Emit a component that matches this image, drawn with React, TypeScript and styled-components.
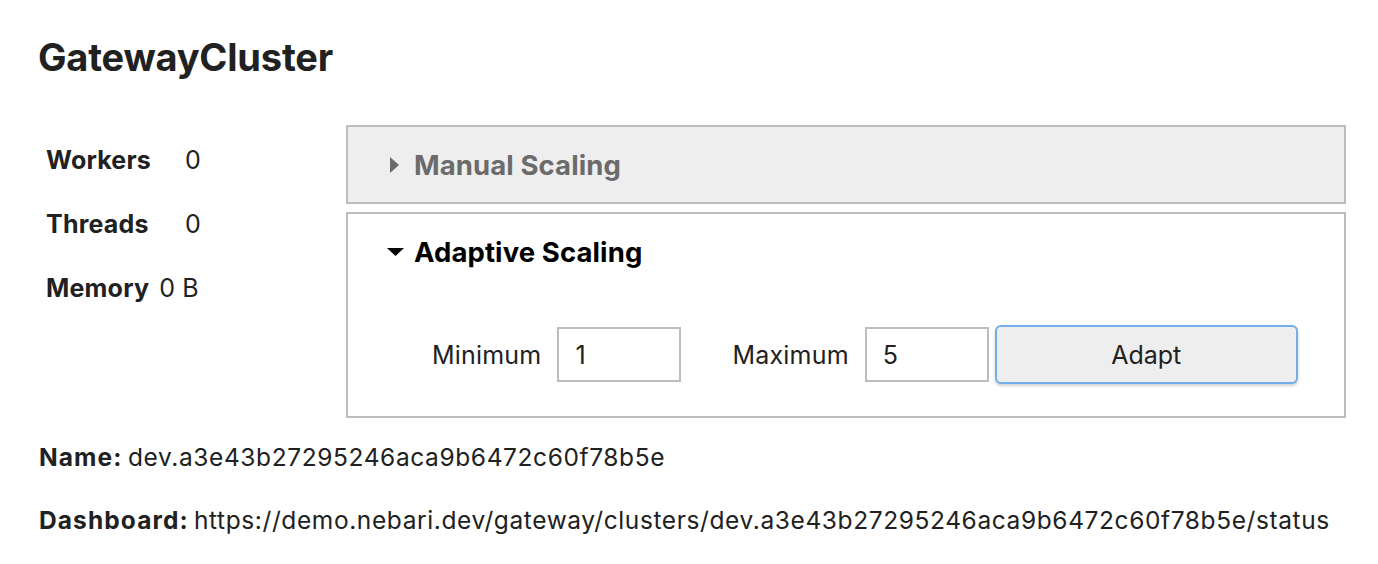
import React from "react";
import styled, { createGlobalStyle } from "styled-components";

const Global = createGlobalStyle`
  html, body { margin: 0; padding: 0; background: #ffffff; }
  body { font-family: Inter, "Noto Sans", sans-serif; color: #212121; }
  * { box-sizing: border-box; }
`;

const Page = styled.div`
  width: 1378px;
  height: 564px;
  padding: 34px 0 0 38px;
`;

const Title = styled.h2`
  margin: 0;
  font-size: 38px;
  line-height: 46px;
  font-weight: 700;
  letter-spacing: -0.2px;
  color: #212121;
`;

const Body = styled.div`
  display: flex;
  margin-top: 45px;
`;

const Stats = styled.div`
  width: 308px;
  padding-left: 8px;
  padding-top: 19px;
  display: flex;
  flex-direction: column;
  gap: 32px;
`;

const StatRow = styled.div`
  display: flex;
  align-items: center;
  height: 32px;
  font-size: 25px;
  letter-spacing: 0.2px;
`;

const StatLabel = styled.span<{ $w?: number }>`
  font-weight: 700;
  width: ${(p) => (p.$w ? `${p.$w}px` : "auto")};
  margin-right: ${(p) => (p.$w ? "0" : "10px")};
`;

const StatValue = styled.span`
  font-weight: 400;
`;

const Panels = styled.div`
  width: 1000px;
  display: flex;
  flex-direction: column;
  gap: 8px;
`;

const Panel = styled.div<{ $collapsed?: boolean }>`
  border: 2px solid #bdbdbd;
  background: ${(p) => (p.$collapsed ? "#eeeeee" : "#ffffff")};
  height: ${(p) => (p.$collapsed ? "79px" : "206px")};
  padding: ${(p) => (p.$collapsed ? "22px 0 0 42px" : "22px 0 0 39px")};
`;

const PanelHeader = styled.div<{ $collapsed?: boolean }>`
  display: flex;
  align-items: center;
  height: 32px;
  font-size: 27.5px;
  font-weight: 700;
  letter-spacing: 0.1px;
  color: ${(p) => (p.$collapsed ? "#6b6b6b" : "#000000")};
`;

const Caret = styled.svg<{ $gap: number }>`
  flex: none;
  margin-right: ${(p) => p.$gap}px;
`;

const ControlRow = styled.div`
  display: flex;
  align-items: center;
  margin-top: 57px;
  padding-left: 45px;
  font-size: 25px;
`;

const FieldLabel = styled.span<{ $gapLeft?: number }>`
  margin-left: ${(p) => p.$gapLeft ?? 0}px;
  margin-right: 16px;
  color: #212121;
  letter-spacing: 0.2px;
`;

const NumberBox = styled.div`
  width: 124px;
  height: 55px;
  border: 2px solid #bdbdbd;
  background: #fff;
  display: flex;
  align-items: center;
  padding-left: 16px;
  font-size: 25px;
  color: #212121;
`;

const AdaptButton = styled.button`
  margin-left: 6px;
  width: 303px;
  height: 59px;
  border: 2px solid #72aee8;
  border-radius: 6px;
  background: #eeeeee;
  box-shadow: 0 2px 3px rgba(0, 0, 0, 0.18);
  font-family: inherit;
  font-size: 25px;
  color: #212121;
  padding: 0;
`;

const Info = styled.div`
  margin-top: 24px;
  padding-left: 1px;
  display: flex;
  flex-direction: column;
  gap: 32px;
  font-size: 24.5px;
  letter-spacing: 0.6px;
  line-height: 31px;
  color: #212121;
`;

const InfoLine = styled.div`
  display: flex;
  white-space: nowrap;
`;

const InfoKey = styled.b<{ $w: number }>`
  flex: none;
  width: ${(p) => p.$w}px;
  font-weight: 700;
  letter-spacing: 1.1px;
`;

const InfoValue = styled.span``;

const RightCaret = () => (
  <Caret $gap={15} width="9" height="16" viewBox="0 0 9 16">
    <path d="M0 0 L9 8 L0 16 Z" fill="#6b6b6b" />
  </Caret>
);

const DownCaret = () => (
  <Caret $gap={10} width="17" height="10" viewBox="0 0 17 10">
    <path d="M0 1 L17 1 L8.5 9 Z" fill="#000" />
  </Caret>
);

export default function App() {
  return (
    <>
      <Global />
      <Page>
        <Title>GatewayCluster</Title>
        <Body>
          <Stats>
            <StatRow>
              <StatLabel $w={139}>Workers</StatLabel>
              <StatValue>0</StatValue>
            </StatRow>
            <StatRow>
              <StatLabel $w={139}>Threads</StatLabel>
              <StatValue>0</StatValue>
            </StatRow>
            <StatRow>
              <StatLabel>Memory</StatLabel>
              <StatValue>0 B</StatValue>
            </StatRow>
          </Stats>
          <Panels>
            <Panel $collapsed>
              <PanelHeader $collapsed>
                <RightCaret />
                Manual Scaling
              </PanelHeader>
            </Panel>
            <Panel>
              <PanelHeader>
                <DownCaret />
                Adaptive Scaling
              </PanelHeader>
              <ControlRow>
                <FieldLabel>Minimum</FieldLabel>
                <NumberBox>1</NumberBox>
                <FieldLabel $gapLeft={51}>Maximum</FieldLabel>
                <NumberBox>5</NumberBox>
                <AdaptButton>Adapt</AdaptButton>
              </ControlRow>
            </Panel>
          </Panels>
        </Body>
        <Info>
          <InfoLine>
            <InfoKey $w={89}>Name:</InfoKey>
            <InfoValue>dev.a3e43b27295246aca9b6472c60f78b5e</InfoValue>
          </InfoLine>
          <InfoLine>
            <InfoKey $w={155}>Dashboard:</InfoKey>
            <InfoValue>
              https://demo.nebari.dev/gateway/clusters/dev.a3e43b27295246aca9b6472c60f78b5e/status
            </InfoValue>
          </InfoLine>
        </Info>
      </Page>
    </>
  );
}
